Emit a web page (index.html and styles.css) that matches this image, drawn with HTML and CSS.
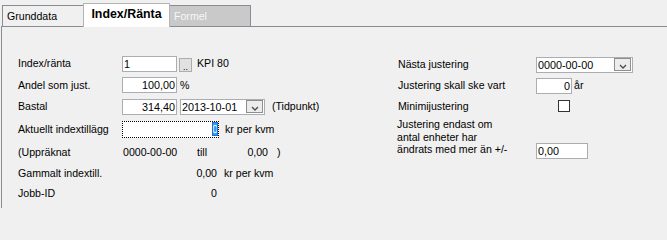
FILE: index.html
```html
<!DOCTYPE html>
<html>
<head>
<meta charset="utf-8">
<link rel="stylesheet" href="styles.css">
</head>
<body>
<div class="tabs">
  <div class="tab first">Grunddata</div>
  <div class="tab active">Index/Ränta</div>
  <div class="tab disabled">Formel</div>
</div>
<div class="panel">
  <div class="col left">
    <div class="row">
      <span class="lbl">Index/ränta</span>
      <span class="box w55">1</span>
      <span class="dots">..</span>
      <span class="ml5">KPI 80</span>
    </div>
    <div class="row">
      <span class="lbl">Andel som just.</span>
      <span class="box w55 num">100,00</span>
      <span class="ml3">%</span>
    </div>
    <div class="row">
      <span class="lbl">Bastal</span>
      <span class="box w55 num">314,40</span>
      <span class="combo w85 ml3"><span class="ctext">2013-10-01</span><span class="dd"><svg width="14" height="11" viewBox="0 0 14 11"><polyline points="4,6 7,9 10,6" fill="none" stroke="#4a4a4a" stroke-width="1.3"/></svg></span></span>
      <span class="ml7">(Tidpunkt)</span>
    </div>
    <div class="row">
      <span class="lbl">Aktuellt indextillägg</span>
      <span class="focus"><span class="sel">0</span></span>
      <span class="ml6">kr per kvm</span>
    </div>
    <div class="row">
      <span class="lbl">(Uppräknat</span>
      <span class="c-date">0000-00-00</span>
      <span class="c-till">till</span>
      <span class="c-val">0,00</span>
      <span class="c-paren">)</span>
    </div>
    <div class="row">
      <span class="lbl">Gammalt indextill.</span>
      <span class="val">0,00</span>
      <span class="ml7">kr per kvm</span>
    </div>
    <div class="row">
      <span class="lbl">Jobb-ID</span>
      <span class="val">0</span>
    </div>
  </div>
  <div class="col right">
    <div class="row">
      <span class="rlbl">Nästa justering</span>
      <span class="combo w97"><span class="ctext">0000-00-00</span><span class="dd"><svg width="14" height="11" viewBox="0 0 14 11"><polyline points="4,6 7,9 10,6" fill="none" stroke="#4a4a4a" stroke-width="1.3"/></svg></span></span>
    </div>
    <div class="row">
      <span class="rlbl">Justering skall ske vart</span>
      <span class="box w36 num">0</span>
      <span class="ml2">år</span>
    </div>
    <div class="row">
      <span class="rlbl">Minimijustering</span>
      <span class="check"></span>
    </div>
    <div class="row multi">
      <span class="rlbl mlbl">Justering endast om<br>antal enheter har<br>ändrats med mer än +/-</span>
      <span class="box w52 endbox">0,00</span>
    </div>
  </div>
</div>
</body>
</html>
```

FILE: styles.css
```css
html, body {
  margin: 0;
  padding: 0;
}
html {
  height: 208px;
  overflow: hidden;
  background: #f0f0f0;
}
body {
  width: 667px;
  height: 208px;
  overflow: hidden;
  background: #f0f0f0;
  font-family: "Liberation Sans", Arial, sans-serif;
  font-size: 10.6px;
  line-height: 13px;
  color: #000;
}
.tabs {
  display: flex;
  align-items: flex-end;
  height: 26px;
  padding-left: 2px;
}
.tab {
  box-sizing: border-box;
  width: 81px;
  height: 21px;
  border: 1px solid #898c95;
  border-bottom: none;
  padding: 4px 0 0 4px;
  background: #f0f0f0;
}
.tab.first {
  border-right: none;
}
.tab.active {
  width: 87px;
  height: 24px;
  margin-bottom: -1px;
  position: relative;
  z-index: 1;
  background: #fff;
  border-color: #b4b4b4;
  font-weight: bold;
  font-size: 12.4px;
  text-align: center;
  padding: 4px 0 0 0;
}
.tab.disabled {
  border-left: none;
  background: #c9c9c9;
  color: #f7f7f7;
}
.panel {
  box-sizing: border-box;
  display: flex;
  margin-left: 1px;
  height: 182px;
  overflow: hidden;
  border-left: 1px solid #898c95;
  border-top: 1px solid #898c95;
  padding: 25px 0 0 16px;
}
.col {
  display: grid;
  align-content: start;
}
.left {
  width: 380px;
  grid-template-rows: 23px 20px 23px 22px 24px 18px 22px;
}
.right {
  grid-template-rows: 25px 17px 24px 41px;
}
.row {
  display: flex;
  align-items: center;
  white-space: nowrap;
}
.lbl {
  width: 104px;
}
.rlbl {
  width: 138px;
}
.box {
  box-sizing: border-box;
  height: 16px;
  border: 1px solid #abadb3;
  background: #fff;
  padding: 0 1px;
  line-height: 14px;
  font-size: 10.8px;
}
.num {
  text-align: right;
}
.w55 { width: 55px; }
.w36 { width: 36px; }
.w52 { width: 52px; }
.w85 { width: 85px; }
.w97 { width: 97px; }
.ml2 { margin-left: 2px; }
.ml3 { margin-left: 3px; }
.ml5 { margin-left: 5px; }
.ml6 { margin-left: 6px; }
.ml7 { margin-left: 7px; }
.dots {
  box-sizing: border-box;
  width: 13px;
  height: 14px;
  margin: 2px 0 0 2px;
  border: 1px solid #adadad;
  background: #e1e1e1;
  font-size: 9px;
  line-height: 16px;
  text-align: center;
  overflow: hidden;
}
.combo {
  box-sizing: border-box;
  display: flex;
  align-items: center;
  height: 16px;
  border: 1px solid #abadb3;
  background: #fff;
  font-size: 10.8px;
}
.ctext {
  flex: 1;
  padding-left: 1px;
  line-height: 14px;
}
.dd {
  box-sizing: border-box;
  display: flex;
  align-items: center;
  justify-content: center;
  width: 17px;
  height: 13px;
  margin-right: 1px;
  border: 1px solid #8e8e8e;
  background: #ececec;
}
.dd svg {
  display: block;
}
.focus {
  box-sizing: border-box;
  display: flex;
  justify-content: flex-end;
  align-items: center;
  width: 97px;
  height: 17px;
  border: 1px dotted #000;
  background: #fff;
  font-size: 10.8px;
}
.sel {
  background: #3399ff;
  color: #fff;
  height: 14px;
  line-height: 14px;
  outline: 1px solid #1f6fc8;
  outline-offset: -1px;
}
.c-date { width: 74px; margin-left: 1px; }
.c-till { width: 45px; }
.c-val { width: 26px; text-align: right; }
.c-paren { margin-left: 9px; }
.val {
  width: 95px;
  text-align: right;
}
.check {
  box-sizing: border-box;
  width: 12px;
  height: 12px;
  margin-left: 22px;
  border: 1px solid #333;
  background: #fff;
}
.multi {
  align-items: flex-start;
}
.mlbl {
  margin-left: -1px;
  width: 139px;
  line-height: 12.5px;
}
.endbox {
  align-self: flex-end;
}
```
